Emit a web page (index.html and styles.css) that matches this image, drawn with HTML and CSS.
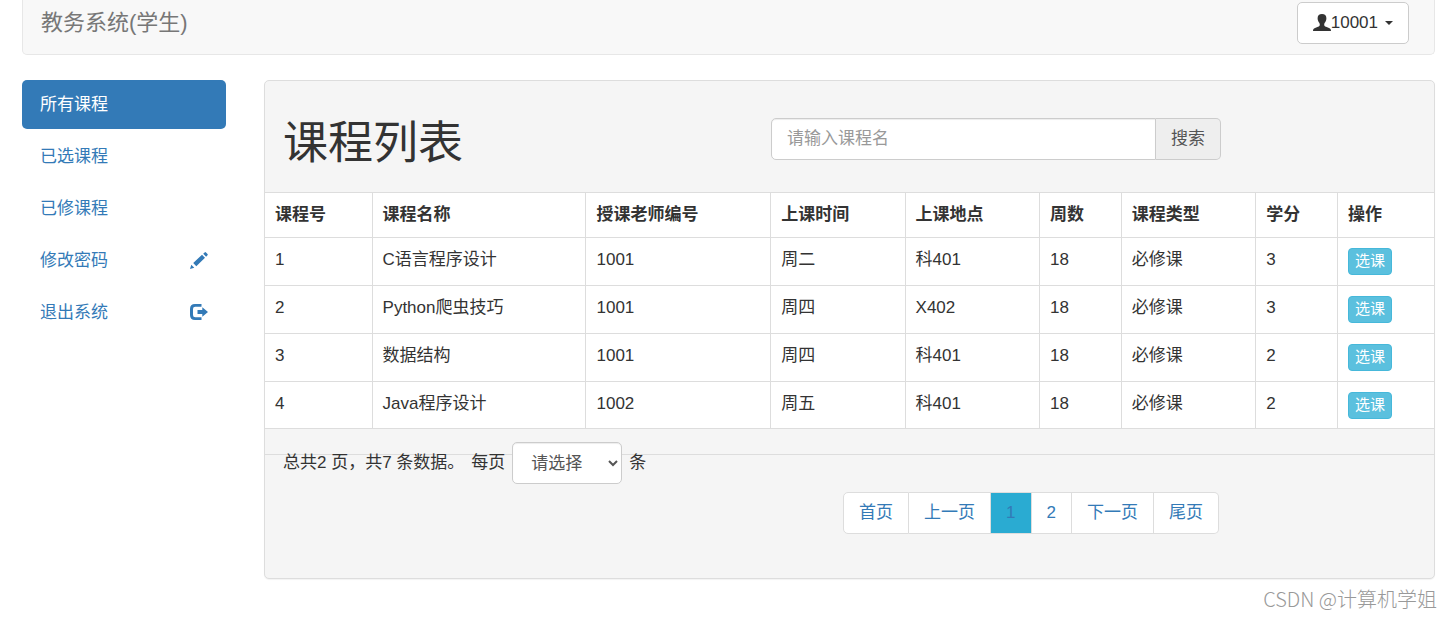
FILE: index.html
```html
<!DOCTYPE html>
<html lang="zh-CN">
<head>
<meta charset="utf-8">
<meta name="viewport" content="width=device-width, initial-scale=1">
<title>教务系统(学生)</title>
<link rel="stylesheet" href="styles.css">
</head>
<body>
<header class="navbar">
  <a class="brand" href="#">教务系统(学生)</a>
  <button class="user-button" type="button"><svg class="icon" viewBox="0 0 18 18" aria-hidden="true"><path d="M9 0C6.300 0 4.500 1.500 4.600 4.200C4.650 5.500 4.800 6.500 5.400 7.600C5.900 8.600 6.700 9.200 6.800 10.400C6.900 11.700 6.200 12.300 5 12.800L2 14.100C.7 14.700 0 15.500 0 17H18C18 15.500 17.300 14.700 16 14.100L13 12.800C11.800 12.300 11.100 11.700 11.200 10.400C11.300 9.200 12.100 8.600 12.600 7.600C13.200 6.500 13.350 5.500 13.400 4.200C13.500 1.500 11.700 0 9 0Z"/></svg><span>10001</span><span class="caret"></span></button>
</header>
<div class="layout">
  <nav class="sidebar">
    <a class="side-link active" href="#">所有课程</a>
    <a class="side-link" href="#">已选课程</a>
    <a class="side-link" href="#">已修课程</a>
    <a class="side-link" href="#">修改密码<svg class="icon" viewBox="0 0 18 18" aria-hidden="true"><path d="M0 17L1.300 12.800L4.300 15.800ZM3.200 11.100L12 2.800L15 5.800L6.300 14.200ZM13.200 1.700L14.600.4Q15.300-.2 16 .4L17.500 1.900Q18.100 2.600 17.500 3.300L16.100 4.700Z"/></svg></a>
    <a class="side-link" href="#">退出系统<svg class="icon" viewBox="0 0 18 18" aria-hidden="true"><path d="M11.500 0H5Q0 0 0 5V11Q0 16 5 16H11.500V13.200H5.300Q3 13.200 3 11V5Q3 2.800 5.300 2.800H11.500ZM12.300 3.200L18 8L12.300 12.800V10H7.500V6H12.300Z"/></svg></a>
  </nav>
  <main class="panel">
    <div class="panel-heading">
      <h1 class="title">课程列表</h1>
      <form class="search">
        <input class="search-input" type="text" placeholder="请输入课程名" aria-label="课程名">
        <button class="search-button" type="button">搜索</button>
      </form>
    </div>
    <table class="courses">
      <colgroup>
        <col class="col-id"><col class="col-name"><col class="col-teacher"><col class="col-medium"><col class="col-medium"><col class="col-small"><col class="col-medium"><col class="col-small"><col class="col-action">
      </colgroup>
      <thead>
        <tr><th>课程号</th><th>课程名称</th><th>授课老师编号</th><th>上课时间</th><th>上课地点</th><th>周数</th><th>课程类型</th><th>学分</th><th>操作</th></tr>
      </thead>
      <tbody>
        <tr><td>1</td><td>C语言程序设计</td><td>1001</td><td>周二</td><td>科401</td><td>18</td><td>必修课</td><td>3</td><td><button class="pick" type="button">选课</button></td></tr>
        <tr><td>2</td><td>Python爬虫技巧</td><td>1001</td><td>周四</td><td>X402</td><td>18</td><td>必修课</td><td>3</td><td><button class="pick" type="button">选课</button></td></tr>
        <tr><td>3</td><td>数据结构</td><td>1001</td><td>周四</td><td>科401</td><td>18</td><td>必修课</td><td>2</td><td><button class="pick" type="button">选课</button></td></tr>
        <tr><td>4</td><td>Java程序设计</td><td>1002</td><td>周五</td><td>科401</td><td>18</td><td>必修课</td><td>2</td><td><button class="pick" type="button">选课</button></td></tr>
      </tbody>
    </table>
    <div class="divider"></div>
    <div class="panel-footer">
      <div class="summary">
        <span>总共2 页，共7 条数据。</span>
        <label for="page-size">每页</label>
        <select class="page-size" id="page-size"><option>请选择</option></select>
        <span>条</span>
      </div>
      <ul class="pagination">
        <li><a class="page" href="#">首页</a></li>
        <li><a class="page" href="#">上一页</a></li>
        <li><a class="page current" href="#">1</a></li>
        <li><a class="page" href="#">2</a></li>
        <li><a class="page" href="#">下一页</a></li>
        <li><a class="page" href="#">尾页</a></li>
      </ul>
    </div>
  </main>
</div>
<div class="watermark">CSDN @计算机学姐</div>
</body>
</html>
```
FILE: styles.css
```css
* {
  box-sizing: border-box;
}

body {
  margin: 0;
  padding: 0 17px 0 22px;
  background: #fff;
  color: #333;
  font-family: "Liberation Sans", "Noto Sans CJK SC", sans-serif;
  font-size: 17px;
  line-height: 24px;
}

a {
  color: #337ab7;
  text-decoration: none;
}

button,
input,
select {
  font: inherit;
}

.icon {
  width: 18px;
  height: 18px;
  fill: currentColor;
}

.navbar {
  display: flex;
  align-items: center;
  justify-content: space-between;
  padding: 2px 25px 10px 18px;
  border: 1px solid #e7e7e7;
  border-top: 0;
  border-radius: 0 0 5px 5px;
  background: #f8f8f8;
}

.brand {
  color: #777;
  font-size: 22px;
}

.user-button {
  display: flex;
  align-items: center;
  padding: 8px 15px;
  border: 1px solid #ccc;
  border-radius: 5px;
  background: #fff;
  color: #333;
}

.caret {
  margin-left: 7px;
  border: 4px solid transparent;
  border-top-color: #333;
  border-bottom: 0;
}

.layout {
  display: grid;
  grid-template-columns: 204px minmax(0, 1fr);
  gap: 38px;
  margin-top: 25px;
}

.sidebar {
  display: flex;
  flex-direction: column;
  gap: 3px;
}

.side-link {
  display: flex;
  align-items: center;
  justify-content: space-between;
  padding: 12px 18px;
  border-radius: 5px;
  line-height: 25px;
}

.side-link.active {
  background: #337ab7;
  color: #fff;
}

.panel {
  border: 1px solid #ddd;
  border-radius: 5px;
  background: #f5f5f5;
  box-shadow: 0 1px 1px rgba(0, 0, 0, 0.05);
}

.panel-heading {
  display: grid;
  grid-template-columns: 488fr 450fr 195fr;
  align-items: start;
  padding: 37px 18px 22px;
}

.title {
  margin: 0;
  font-size: 45px;
  font-weight: 400;
  line-height: 52px;
}

.search {
  display: flex;
}

.search-input {
  flex: 1;
  min-width: 0;
  padding: 8px 15px;
  border: 1px solid #ccc;
  border-radius: 5px 0 0 5px;
  background: #fff;
  box-shadow: inset 0 1px 1px rgba(0, 0, 0, 0.075);
  color: #555;
}

.search-input::placeholder {
  color: #999;
}

.search-button {
  padding: 8px 15px;
  border: 1px solid #ccc;
  border-left: 0;
  border-radius: 0 5px 5px 0;
  background: #eee;
  color: #555;
}

.courses {
  width: 100%;
  border-collapse: separate;
  border-spacing: 0;
  border-bottom: 1px solid #ddd;
  background: #fff;
  table-layout: fixed;
}

.courses th,
.courses td {
  padding: 10px;
  border-top: 1px solid #ddd;
  border-right: 1px solid #ddd;
  text-align: left;
  vertical-align: top;
}

.courses th:last-child,
.courses td:last-child {
  border-right: 0;
}

.courses tr:last-child td {
  padding-bottom: 9px;
}

.col-id {
  width: 9.2%;
}

.col-name {
  width: 18.3%;
}

.col-teacher {
  width: 15.8%;
}

.col-medium {
  width: 11.5%;
}

.col-small {
  width: 7%;
}

.col-action {
  width: 8.2%;
}

.pick {
  display: block;
  padding: 0 6px 2px;
  border: 1px solid #46b8da;
  border-radius: 4px;
  background: #5bc0de;
  color: #fff;
  font-size: 15px;
  line-height: 23px;
}

.divider {
  height: 26px;
  border-bottom: 1px solid #ddd;
}

.panel-footer {
  margin-top: -13px;
  padding: 0 18px 44px;
}

.summary {
  display: flex;
  align-items: center;
  gap: 7px;
}

.page-size {
  width: 110px;
  height: 42px;
  padding: 0 0 0 14px;
  border: 1px solid #ccc;
  border-radius: 5px;
  background: #fff;
  box-shadow: inset 0 1px 1px rgba(0, 0, 0, 0.075);
  color: #555;
}

.pagination {
  display: flex;
  justify-content: flex-end;
  margin: 8px 0 0;
  padding: 0 197px 0 0;
  list-style: none;
}

.page {
  display: block;
  padding: 8px 15px;
  border: 1px solid #ddd;
  border-left: 0;
  background: #fff;
}

.pagination li:first-child .page {
  border-left: 1px solid #ddd;
  border-radius: 5px 0 0 5px;
}

.pagination li:last-child .page {
  border-radius: 0 5px 5px 0;
}

.page.current {
  background: #2aabd2;
}

.watermark {
  margin-top: 8px;
  margin-right: -2px;
  color: #999;
  font-family: "Noto Sans CJK SC", sans-serif;
  font-size: 20px;
  font-weight: 300;
  text-align: right;
}
```
